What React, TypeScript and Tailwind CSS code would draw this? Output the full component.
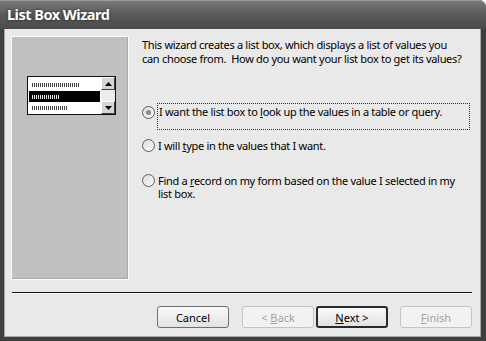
export default function App() {
  return (
    <div className="w-[486px] h-[341px] bg-[#3f3f3f] flex flex-col overflow-hidden rounded-tr-[7px] font-['Noto_Sans',sans-serif]">
      {/* title bar */}
      <div className="h-[29px] shrink-0 bg-gradient-to-b from-[#7a7a7a] via-[#5a5a5a] to-[#4a4a4a] border-t border-[#9a9a9a] rounded-tr-[7px] flex items-center pl-[7px]">
        <span className="text-white font-bold text-[14.5px] tracking-[-0.5px] [text-shadow:0_0_3px_#222]">List Box Wizard</span>
      </div>
      {/* body */}
      <div className="flex-1 ml-[4px] mr-[5px] mb-[4px] bg-[#e9e9e9] border-l border-r border-b border-[#a8a8a8] flex flex-col">
        <div className="flex pt-[7px] pl-[6px]">
          <LeftPanel />
          <div className="ml-[13px] pt-[2px] text-[11px] tracking-[-0.3px] text-black w-[330px]">
            <p className="leading-[14px]">
              This wizard creates a list box, which displays a list of values you
              <br />
              can choose from.&nbsp; How do you want your list box to get its values?
            </p>
            <div className="mt-[37px] flex">
              <Radio checked className="mt-[3px]" />
              <div className="ml-[2px] w-[313px] h-[27px] border border-dotted border-[#333] px-[1px] leading-[13px] pt-[1px]">
                I want the list box to <u>l</u>ook up the values in a table or query.
              </div>
            </div>
            <div className="mt-[9px] flex items-center">
              <Radio />
              <span className="ml-[3px] leading-[13px]">
                I will <u>t</u>ype in the values that I want.
              </span>
            </div>
            <div className="mt-[22px] flex">
              <Radio />
              <span className="ml-[3px] leading-[13px] w-[305px]">
                Find a <u>r</u>ecord on my form based on the value I selected in my list box.
              </span>
            </div>
          </div>
        </div>
        <div className="mt-[12px] ml-[7px] w-[460px] h-[2px] bg-[#111] border-b border-[#fff]" />
        <div className="mt-[12px] flex pl-[152px] text-[11px]">
          <Button>Cancel</Button>
          <Button disabled className="ml-[13px]">
            <span>
              &lt; <u>B</u>ack
            </span>
          </Button>
          <Button primary className="ml-[2px]">
            <span>
              <u>N</u>ext &gt;
            </span>
          </Button>
          <Button disabled className="ml-[12px]">
            <span>
              <u>F</u>inish
            </span>
          </Button>
        </div>
      </div>
    </div>
  )
}

function LeftPanel() {
  return (
    <div className="w-[118px] h-[244px] border border-[#fbfbfb] shrink-0">
      <div className="w-full h-full bg-[#c0c0c0] border-r border-b border-[#a9a9a9] pt-[39px] pl-[15px]">
        <div className="w-[89px] h-[39px] bg-white border border-[#111] flex">
          <div className="flex-1 pt-[2px]">
            <div className="h-[12px] flex items-center pl-[4px]">
              <Dots w="w-[48px]" />
            </div>
            <div className="h-[11px] mx-[1px] bg-black flex items-center pl-[3px]">
              <Dots w="w-[28px]" light />
            </div>
            <div className="h-[11px] flex items-center pl-[4px]">
              <Dots w="w-[36px]" />
            </div>
          </div>
          <div className="w-[14px] flex flex-col">
            <ScrollBtn up />
            <div className="flex-1 bg-[#ececec]" />
            <ScrollBtn />
          </div>
        </div>
      </div>
    </div>
  )
}

function Dots({ w, light }: { w: string; light?: boolean }) {
  return (
    <div
      className={`${w} h-[4px] ${
        light
          ? "bg-[repeating-linear-gradient(90deg,#e8e8e8_0_1px,transparent_1px_2px)]"
          : "bg-[repeating-linear-gradient(90deg,#444_0_1px,transparent_1px_2px)]"
      }`}
    />
  )
}

function ScrollBtn({ up }: { up?: boolean }) {
  return (
    <div className="h-[13px] bg-[#d4d4d4] border border-t-white border-l-white border-r-[#404040] border-b-[#404040] flex items-center justify-center">
      <svg width="7" height="4" viewBox="0 0 7 4">
        {up ? <polygon points="0,4 7,4 3.5,0" fill="#000" /> : <polygon points="0,0 7,0 3.5,4" fill="#000" />}
      </svg>
    </div>
  )
}

function Radio({ checked, className = "" }: { checked?: boolean; className?: string }) {
  return (
    <div
      className={`w-[13px] h-[13px] shrink-0 rounded-full border border-[#5c5c5c] bg-gradient-to-br from-[#dcdcdc] to-[#fafafa] flex items-center justify-center ${className}`}
    >
      {checked && <div className="w-[5px] h-[5px] rounded-full bg-[#8a8a8a]" />}
    </div>
  )
}

function Button({
  children,
  disabled,
  primary,
  className = "",
}: {
  children: React.ReactNode
  disabled?: boolean
  primary?: boolean
  className?: string
}) {
  const base = "w-[72px] h-[22px] rounded-[3px] flex items-center justify-center leading-none"
  const look = disabled
    ? "border border-[#c4c4c4] bg-[#f2f2f2] text-[#a2a2a2]"
    : primary
      ? "border-2 border-[#2a2a2a] bg-gradient-to-b from-[#fafafa] to-[#e2e2e2] text-black"
      : "border border-[#6e6e6e] bg-gradient-to-b from-[#fafafa] to-[#e2e2e2] text-black"
  return <div className={`${base} ${look} ${className}`}>{children}</div>
}
